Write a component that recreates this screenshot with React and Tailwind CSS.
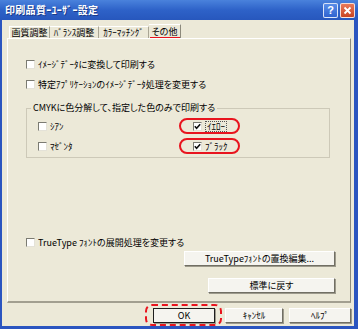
import React from "react";

function Box({ checked }) {
  return (
    <span className="w-[9px] h-[9px] shrink-0 bg-white border border-t-[#7b7b72] border-l-[#7b7b72] border-r-[#e4e2d8] border-b-[#e4e2d8] flex items-center justify-center">
      {checked && (
        <svg width="7" height="7" viewBox="0 0 7 7">
          <path d="M0.8 3.2 L2.6 5.2 L6.2 1.2" stroke="#111" strokeWidth="1.6" fill="none" />
        </svg>
      )}
    </span>
  );
}

function Check({ label, checked, focus }) {
  return (
    <div className="h-[12px] flex items-center gap-[3px]">
      <Box checked={checked} />
      <span
        className={
          focus
            ? "leading-none px-[1px] border border-dotted border-[#555] whitespace-nowrap"
            : "leading-none whitespace-nowrap"
        }
      >
        {label}
      </span>
    </div>
  );
}

function Btn({ children, w, strong }) {
  return (
    <div
      className={
        (strong
          ? "border border-[#1e1e1e] "
          : "border border-t-white border-l-white border-r-[#716f64] border-b-[#716f64] ") +
        w +
        " h-[15px] bg-[#f5f4ef] shadow-[1px_1px_0_#9d9a8c] flex items-center justify-center leading-none whitespace-nowrap"
      }
    >
      {children}
    </div>
  );
}

export default function App() {
  return (
    <div className="w-[358px] h-[329px] flex flex-col bg-[#2b55c0] font-['Noto_Sans_CJK_JP','Noto_Sans',sans-serif] [font-feature-settings:'palt'] text-[9px] text-black overflow-hidden">
      {/* title bar */}
      <div className="h-[20px] shrink-0 flex items-center bg-gradient-to-b from-[#4a82dc] via-[#2e62c8] to-[#2757bd] pl-[5px] pr-[3px]">
        <span className="text-white font-bold text-[10px] leading-none tracking-[0.3px] [text-shadow:1px_1px_0_#1a3a8a]">
          印刷品質ｰﾕｰｻﾞｰ設定
        </span>
        <div className="ml-auto flex gap-[2px] pt-[1px]">
          <div className="w-[15px] h-[15px] rounded-[2px] border border-white/80 bg-gradient-to-b from-[#5a8ee8] to-[#2f63d0] flex items-center justify-center text-white font-bold text-[11px] leading-none font-['Liberation_Sans',sans-serif]">
            ?
          </div>
          <div className="w-[15px] h-[15px] rounded-[2px] border border-white/80 bg-gradient-to-b from-[#e8795a] to-[#c9431f] flex items-center justify-center">
            <svg width="9" height="9" viewBox="0 0 9 9">
              <path d="M1.5 1.5 L7.5 7.5 M7.5 1.5 L1.5 7.5" stroke="white" strokeWidth="1.8" />
            </svg>
          </div>
        </div>
      </div>

      {/* body */}
      <div className="flex-1 ml-[2px] mr-[4px] mb-[3px] bg-[#ece9d8] flex flex-col">
        {/* tabs */}
        <div className="h-[18px] pt-[4px] pl-[7px] flex items-end">
          <div className="h-[12px] w-[41px] border-t border-l border-t-white border-l-white border-r border-r-[#a9a594] flex items-center justify-center leading-none">
            画質調整
          </div>
          <div className="h-[12px] w-[49px] border-t border-t-white border-r border-r-[#a9a594] flex items-center justify-center leading-none">
            ﾊﾞﾗﾝｽ調整
          </div>
          <div className="h-[12px] w-[50px] border-t border-t-white border-r border-r-[#a9a594] flex items-center justify-center leading-none">
            ｶﾗｰﾏｯﾁﾝｸﾞ
          </div>
          <div className="h-[14px] w-[32px] border-t border-t-white border-r border-r-[#8d8a7c] flex flex-col items-center justify-end leading-none">
            <span className="pb-[1px]">その他</span>
            <span className="w-[30px] h-[1px] bg-[#e8141e]"></span>
          </div>
        </div>

        {/* panel */}
        <div className="ml-[5px] w-[344px] h-[265px] border-l border-t border-l-white border-t-white border-r border-r-[#8d8a7c] border-b-2 border-b-[#a29f90] flex flex-col pl-[18px]">
          <div className="mt-[19px]">
            <Check label="ｲﾒｰｼﾞﾃﾞｰﾀに変換して印刷する" />
          </div>
          <div className="mt-[8px]">
            <Check label="特定ｱﾌﾟﾘｹｰｼｮﾝのｲﾒｰｼﾞﾃﾞｰﾀ処理を変更する" />
          </div>

          <fieldset className="mt-[12px] w-[304px] border border-[#cdc9b8] pb-[3px]">
            <legend className="ml-[4px] px-[2px] h-[12px] leading-[12px]">
              CMYKに色分解して、指定した色のみで印刷する
            </legend>
            <div className="mt-[4px] h-[16px] flex items-center">
              <div className="w-[152px] pl-[11px]">
                <Check label="ｼｱﾝ" />
              </div>
              <div className="w-[61px] h-[16px] rounded-full border-2 border-[#e8141e] pl-[12px] flex items-center">
                <Check label="ｲｴﾛｰ" checked focus />
              </div>
            </div>
            <div className="mt-[4px] h-[16px] flex items-center">
              <div className="w-[152px] pl-[11px]">
                <Check label="ﾏｾﾞﾝﾀ" />
              </div>
              <div className="w-[61px] h-[16px] rounded-full border-2 border-[#e8141e] pl-[12px] flex items-center">
                <Check label="ﾌﾞﾗｯｸ" checked />
              </div>
            </div>
          </fieldset>

          <div className="mt-[78px]">
            <Check label="TrueType ﾌｫﾝﾄの展開処理を変更する" />
          </div>
          <div className="mt-[3px] self-end mr-[15px]">
            <Btn w="w-[151px]">TrueTypeﾌｫﾝﾄの置換編集...</Btn>
          </div>
          <div className="mt-[12px] self-end mr-[15px]">
            <Btn w="w-[127px]">標準に戻す</Btn>
          </div>
        </div>

        {/* bottom buttons */}
        <div className="flex items-start ml-[143px] mt-[1px]">
          <div className="h-[22px] border-2 border-dashed border-[#e8141e] rounded-[7px] pl-[6px] pr-[5px] pt-[2px]">
            <Btn w="w-[62px]" strong>
              OK
            </Btn>
          </div>
          <div className="ml-[3px] mt-[4px]">
            <Btn w="w-[58px]">ｷｬﾝｾﾙ</Btn>
          </div>
          <div className="ml-[6px] mt-[4px]">
            <Btn w="w-[62px]">ﾍﾙﾌﾟ</Btn>
          </div>
        </div>
      </div>
    </div>
  );
}
